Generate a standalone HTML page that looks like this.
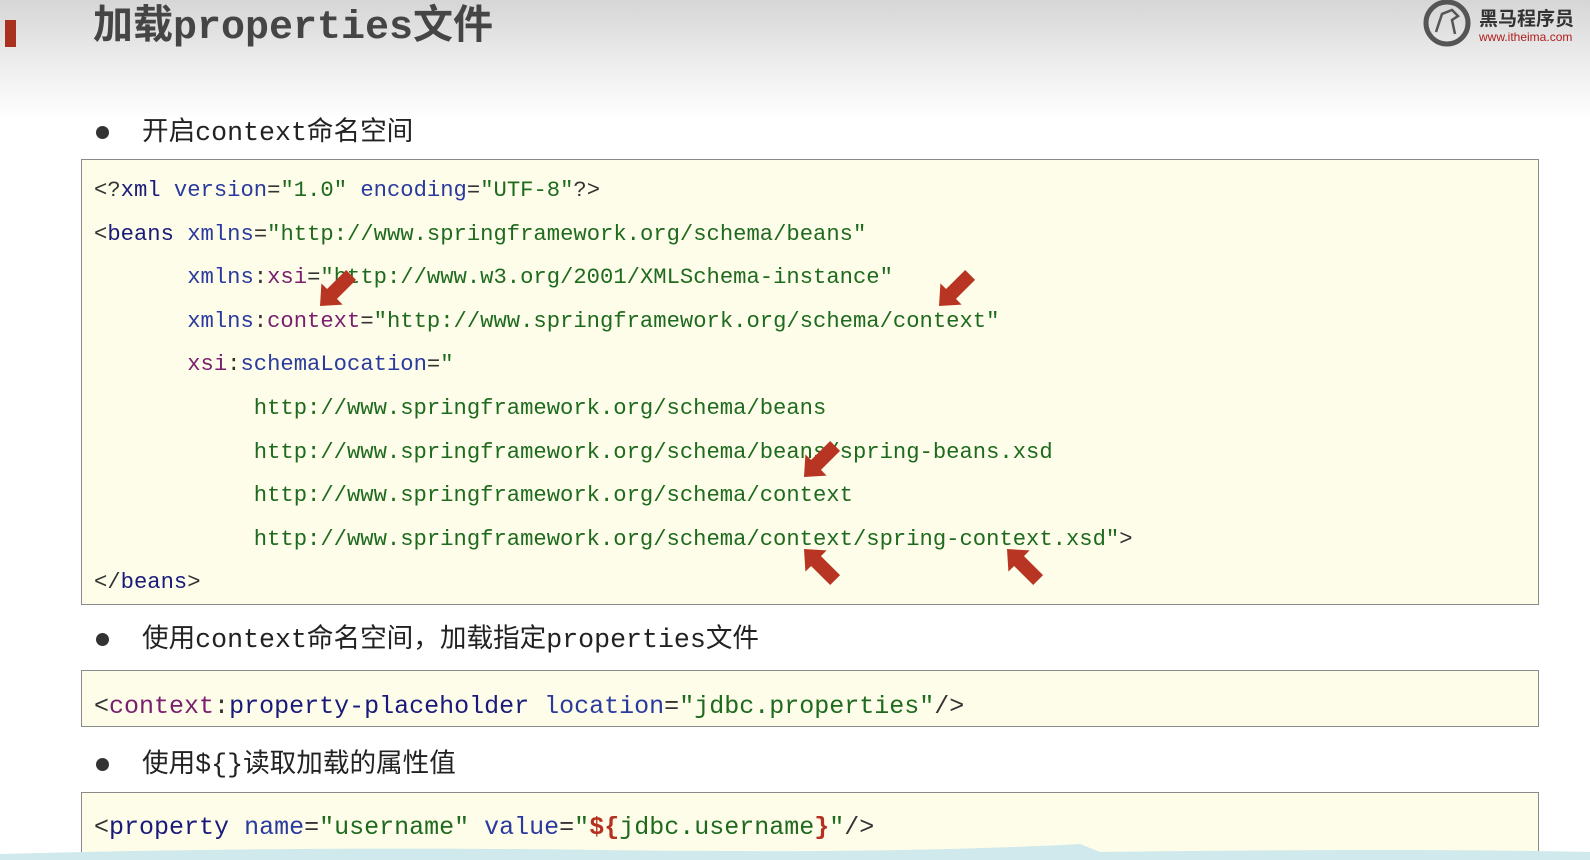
<!DOCTYPE html>
<html><head><meta charset="utf-8"><style>
*{margin:0;padding:0;box-sizing:border-box}
body{width:1590px;height:860px;overflow:hidden;position:relative;background:#fff;font-family:"Liberation Sans","Noto Sans CJK SC",sans-serif}
.hdr{position:absolute;left:0;top:0;width:1590px;height:120px;background:linear-gradient(#d6d6d6,#ececec 50%,#fff)}
.bar{position:absolute;left:5px;top:20px;width:11px;height:27px;background:#a8321f}
.title{position:absolute;left:93px;top:4px;font-size:40px;font-weight:bold;color:#454545;line-height:50px;font-family:"Liberation Mono","Noto Sans CJK SC",monospace}
.bul{position:absolute;left:142px;font-size:26.6px;color:#222;line-height:34px;font-family:"Liberation Mono","Noto Sans CJK SC",monospace}
.dot{position:absolute;left:96px;width:13px;height:13px;border-radius:50%;background:#333}
.box{position:absolute;left:81px;width:1458px;background:#fdfde9;border:1px solid #8a8a8a}
.code{position:absolute;font-family:"Liberation Mono",monospace;font-size:22.2px;line-height:43.6px;white-space:pre;color:#333}
.t{color:#1a1a7a}.a{color:#2a3a9e}.p{color:#7a1f6e}.v{color:#1e6a1e}.r{color:#b5301f;font-weight:bold}
</style></head><body>
<div class="hdr"></div>
<div class="bar"></div>
<div class="title">加载properties文件</div>
<svg style="position:absolute;left:1422px;top:0" width="168" height="52">
<circle cx="25" cy="23" r="21" fill="none" stroke="#555" stroke-width="5"/>
<path d="M14 32 L20 14 L30 10 L36 16 L30 20 L33 34" fill="none" stroke="#555" stroke-width="2.5"/>
<text x="57" y="25" font-size="19" font-weight="bold" fill="#333" font-family="Noto Sans CJK SC,sans-serif">黑马程序员</text>
<text x="57" y="41" font-size="12" fill="#b01c1c" font-family="Liberation Sans,sans-serif">www.itheima.com</text>
</svg>
<div class="dot" style="top:126px"></div>
<div class="bul" style="top:116px">开启context命名空间</div>
<div class="box" style="top:159px;height:446px"></div>
<div class="code" style="left:94px;top:169px"><span>&lt;?</span><span class="t">xml</span> <span class="a">version</span>=<span class="v">"1.0"</span> <span class="a">encoding</span>=<span class="v">"UTF-8"</span>?&gt;
&lt;<span class="t">beans</span> <span class="a">xmlns</span>=<span class="v">"http://www.springframework.org/schema/beans"</span>
       <span class="a">xmlns</span>:<span class="p">xsi</span>=<span class="v">"http://www.w3.org/2001/XMLSchema-instance"</span>
       <span class="a">xmlns</span>:<span class="p">context</span>=<span class="v">"http://www.springframework.org/schema/context"</span>
       <span class="p">xsi</span>:<span class="a">schemaLocation</span>=<span class="v">"</span>
            <span class="v">http://www.springframework.org/schema/beans</span>
            <span class="v">http://www.springframework.org/schema/beans/spring-beans.xsd</span>
            <span class="v">http://www.springframework.org/schema/context</span>
            <span class="v">http://www.springframework.org/schema/context/spring-context.xsd"</span>&gt;
&lt;/<span class="t">beans</span>&gt;</div>
<svg style="position:absolute;left:0;top:0" width="1590" height="860">
<defs><polygon id="ar" fill="#b83524" points="0,0 17,-15 17,-7 44,-7 44,7 17,7 17,15"/></defs>
<use href="#ar" transform="translate(320,306) rotate(-45)"/>
<use href="#ar" transform="translate(939,306) rotate(-45)"/>
<use href="#ar" transform="translate(804,477) rotate(-45)"/>
<use href="#ar" transform="translate(804,549) rotate(45)"/>
<use href="#ar" transform="translate(1007,549) rotate(45)"/>
</svg>
<div class="dot" style="top:633px"></div>
<div class="bul" style="top:623px">使用context命名空间，加载指定properties文件</div>
<div class="box" style="top:670px;height:57px"></div>
<div class="code" style="left:94px;top:685px;font-size:25px">&lt;<span class="p">context</span>:<span class="t">property-placeholder</span> <span class="a">location</span>=<span class="v">"jdbc.properties"</span>/&gt;</div>
<div class="dot" style="top:758px"></div>
<div class="bul" style="top:748px">使用${}读取加载的属性值</div>
<div class="box" style="top:792px;height:63px"></div>
<div class="code" style="left:94px;top:806px;font-size:25px">&lt;<span class="t">property</span> <span class="a">name</span>=<span class="v">"username"</span> <span class="a">value</span>=<span class="v">"</span><span class="r">${</span><span class="v">jdbc.username</span><span class="r">}</span><span class="v">"</span>/&gt;</div>
<svg style="position:absolute;left:0;top:840px" width="1590" height="20"><path d="M0 14 Q300 6 600 10 T1080 4 L1100 12 Q1400 8 1590 12 L1590 20 L0 20Z" fill="#cfe9ec"/></svg>
</body></html>
